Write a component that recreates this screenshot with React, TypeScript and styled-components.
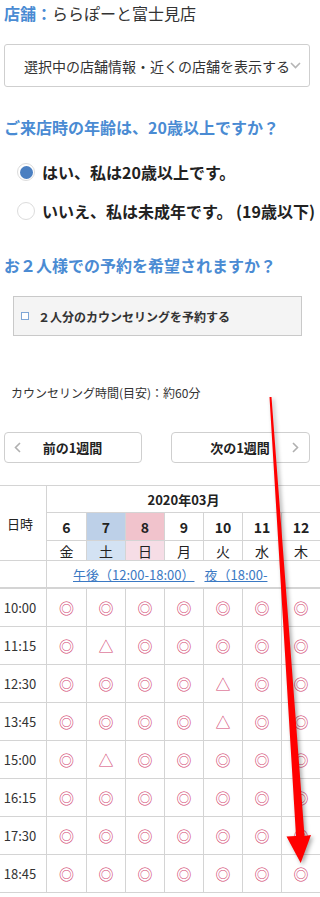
import React from "react";
import styled, { createGlobalStyle } from "styled-components";

const BLUE = "#4a8bd3";
const LINE = "#d4d4d4";
const MARK = "#d2436f";

const GlobalStyle = createGlobalStyle`
  html, body { margin: 0; padding: 0; background: #fff; overflow-x: hidden; }
  body { font-family: "Noto Sans CJK JP", "Noto Sans", sans-serif; color: #333; }
  * { box-sizing: border-box; }
`;

const Root = styled.div`
  position: relative;
  width: 320px;
  min-height: 897px;
  overflow: hidden;
`;

const Content = styled.div`
  padding: 0 10px 0 4px;
`;

const StoreLine = styled.div`
  height: 26px;
  line-height: 26px;
  font-size: 16px;
  white-space: nowrap;
`;

const StoreLabel = styled.span`
  color: ${BLUE};
  font-weight: 700;
`;

const StoreName = styled.span`
  color: #333;
`;

const SelectBox = styled.div`
  margin-top: 18px;
  height: 43px;
  border: 1px solid #cfcfcf;
  border-radius: 3px;
  display: flex;
  align-items: center;
  padding-left: 19px;
  font-size: 14px;
  color: #333;
  white-space: nowrap;
`;

const Heading = styled.h2<{ $mt: number }>`
  margin: ${(p) => p.$mt}px 0 0;
  font-size: 16px;
  line-height: 24px;
  font-weight: 700;
  color: ${BLUE};
  white-space: nowrap;
`;

const RadioList = styled.div`
  margin-top: 21px;
  padding-left: 13px;
  display: flex;
  flex-direction: column;
  gap: 15px;
`;

const RadioRow = styled.label`
  display: flex;
  align-items: center;
  height: 24px;
  gap: 7px;
  font-size: 16px;
  font-weight: 700;
  color: #222;
  white-space: nowrap;
`;

const RadioCircle = styled.span<{ $checked?: boolean }>`
  flex: none;
  width: 18px;
  height: 18px;
  border-radius: 50%;
  border: 1px solid #dcdcdc;
  background: #fff;
  display: flex;
  align-items: center;
  justify-content: center;
  &::after {
    content: "";
    width: 13px;
    height: 13px;
    border-radius: 50%;
    background: ${(p) => (p.$checked ? "#4a7fc1" : "transparent")};
  }
`;

const PairBox = styled.div`
  margin: 19px 0 0 9px;
  width: 289px;
  height: 40px;
  background: #f4f4f4;
  border: 1px solid #c9c9c9;
  display: flex;
  align-items: center;
  padding-left: 7px;
  gap: 9px;
  font-size: 12px;
  font-weight: 700;
  color: #333;
  white-space: nowrap;
`;

const CheckSquare = styled.span`
  flex: none;
  width: 8px;
  height: 8px;
  border: 1px solid #7fa6d6;
  background: #fff;
`;

const Note = styled.p`
  margin: 48px 0 0 7px;
  font-size: 12px;
  line-height: 18px;
  color: #333;
  white-space: nowrap;
`;

const NavRow = styled.div`
  margin-top: 30px;
  display: flex;
  justify-content: space-between;
`;

const NavButton = styled.button<{ $w: number }>`
  width: ${(p) => p.$w}px;
  height: 31px;
  border: 1px solid #cfcfcf;
  border-radius: 4px;
  background: #fff;
  padding: 0 10px 0 9px;
  display: grid;
  grid-template-columns: 1fr auto 1fr;
  align-items: center;
  font-family: inherit;
  font-size: 13px;
  font-weight: 700;
  color: #222;
`;

const ChevronSlot = styled.span<{ $end?: boolean }>`
  display: flex;
  justify-content: ${(p) => (p.$end ? "flex-end" : "flex-start")};
  color: #b0b0b0;
`;

const Table = styled.div`
  margin-top: 22px;
  border-top: 1px solid ${LINE};
  border-bottom: 1px solid ${LINE};
  background: ${LINE};
`;

const HeadGrid = styled.div`
  display: grid;
  grid-template-columns: 46px 39px repeat(6, 38px);
  grid-template-rows: 26px 27px 19px 26px;
  gap: 1px;
`;

const BodyGrid = styled.div`
  margin-top: 2px;
  display: grid;
  grid-template-columns: 46px 39px repeat(6, 38px);
  grid-auto-rows: 37px;
  gap: 1px;
`;

const Cell = styled.div<{ $bg?: string }>`
  background: ${(p) => p.$bg || "#fff"};
  display: flex;
  align-items: center;
  justify-content: center;
  font-size: 13px;
  color: #222;
  white-space: nowrap;
`;

const CornerCell = styled(Cell)`
  grid-column: 1;
  grid-row: 1 / 4;
  padding-right: 6px;
`;

const BlankCell = styled(Cell)`
  grid-column: 1;
  grid-row: 4;
`;

const MonthCell = styled(Cell)`
  grid-column: 2 / 9;
  grid-row: 1;
  font-weight: 700;
`;

const DayCell = styled(Cell)`
  font-size: 14px;
  font-weight: 700;
`;

const WeekCell = styled(Cell)`
  font-size: 14px;
`;

const PeriodCell = styled(Cell)`
  grid-column: 2 / 9;
  grid-row: 4;
  justify-content: flex-start;
  padding-left: 26px;
  overflow: hidden;
  gap: 10px;
`;

const PeriodLink = styled.a`
  color: #3b79c3;
  text-decoration: underline;
  font-size: 13px;
`;

const TimeCell = styled(Cell)`
  padding-right: 6px;
  color: #333;
`;

const MarkCell = styled(Cell)`
  color: ${MARK};
  font-size: 15px;
`;

const ArrowOverlay = styled.svg`
  position: absolute;
  top: 0;
  left: 0;
  pointer-events: none;
  filter: drop-shadow(2px 2px 2px rgba(0, 0, 0, 0.35));
`;

const days = [
  { n: "6", w: "金" },
  { n: "7", w: "土", bg: "#bdd0e8", wbg: "#d3e2f3" },
  { n: "8", w: "日", bg: "#f1c3cc", wbg: "#f6dde6" },
  { n: "9", w: "月" },
  { n: "10", w: "火" },
  { n: "11", w: "水" },
  { n: "12", w: "木" },
];

const rows: [string, string][] = [
  ["10:00", "◎◎◎◎◎◎◎"],
  ["11:15", "◎△◎◎◎◎◎"],
  ["12:30", "◎◎◎◎△◎◎"],
  ["13:45", "◎◎◎◎△◎◎"],
  ["15:00", "◎△◎◎◎◎◎"],
  ["16:15", "◎◎◎◎◎◎◎"],
  ["17:30", "◎◎◎◎◎◎◎"],
  ["18:45", "◎◎◎◎◎◎◎"],
];

const Chevron = ({ dir }: { dir: "left" | "right" | "down" }) => {
  if (dir === "down")
    return (
      <svg width="11" height="7" viewBox="0 0 11 7">
        <polyline points="1,1 5.5,5.5 10,1" fill="none" stroke="#b5b5b5" strokeWidth="1.6" />
      </svg>
    );
  return (
    <svg width="7" height="11" viewBox="0 0 7 11">
      <polyline
        points={dir === "left" ? "6,1 1.5,5.5 6,10" : "1,1 5.5,5.5 1,10"}
        fill="none"
        stroke="#b0b0b0"
        strokeWidth="1.6"
      />
    </svg>
  );
};

export default function App() {
  return (
    <Root>
      <GlobalStyle />
      <Content>
        <StoreLine>
          <StoreLabel>店舗：</StoreLabel>
          <StoreName>ららぽーと富士見店</StoreName>
        </StoreLine>
        <SelectBox>
          選択中の店舗情報・近くの店舗を表示する
          <Chevron dir="down" />
        </SelectBox>
        <Heading $mt={28}>ご来店時の年齢は、20歳以上ですか？</Heading>
        <RadioList>
          <RadioRow>
            <RadioCircle $checked />
            はい、私は20歳以上です。
          </RadioRow>
          <RadioRow>
            <RadioCircle />
            いいえ、私は未成年です。 (19歳以下)
          </RadioRow>
        </RadioList>
        <Heading $mt={30}>お２人様での予約を希望されますか？</Heading>
        <PairBox>
          <CheckSquare />
          ２人分のカウンセリングを予約する
        </PairBox>
        <Note>カウンセリング時間(目安)：約60分</Note>
        <NavRow>
          <NavButton $w={138}>
            <ChevronSlot>
              <Chevron dir="left" />
            </ChevronSlot>
            前の1週間
            <span />
          </NavButton>
          <NavButton $w={139}>
            <span />
            次の1週間
            <ChevronSlot $end>
              <Chevron dir="right" />
            </ChevronSlot>
          </NavButton>
        </NavRow>
      </Content>
      <Table>
        <HeadGrid>
          <CornerCell>日時</CornerCell>
          <MonthCell>2020年03月</MonthCell>
          {days.map((d) => (
            <DayCell key={"n" + d.n} $bg={d.bg}>
              {d.n}
            </DayCell>
          ))}
          {days.map((d) => (
            <WeekCell key={"w" + d.n} $bg={d.wbg}>
              {d.w}
            </WeekCell>
          ))}
          <BlankCell />
          <PeriodCell>
            <PeriodLink>午後（12:00-18:00）</PeriodLink>
            <PeriodLink>夜（18:00-</PeriodLink>
          </PeriodCell>
        </HeadGrid>
        <BodyGrid>
          {rows.map(([t, marks]) => (
            <React.Fragment key={t}>
              <TimeCell>{t}</TimeCell>
              {Array.from(marks).map((m, i) => (
                <MarkCell key={i}>{m}</MarkCell>
              ))}
            </React.Fragment>
          ))}
        </BodyGrid>
      </Table>
      <ArrowOverlay width="320" height="897" viewBox="0 0 320 897">
        <polygon
          points="269.5,397 271.5,397 304.5,836 311,835 300.7,863 286.5,836.5 296,836"
          fill="#ff0000"
        />
      </ArrowOverlay>
    </Root>
  );
}
